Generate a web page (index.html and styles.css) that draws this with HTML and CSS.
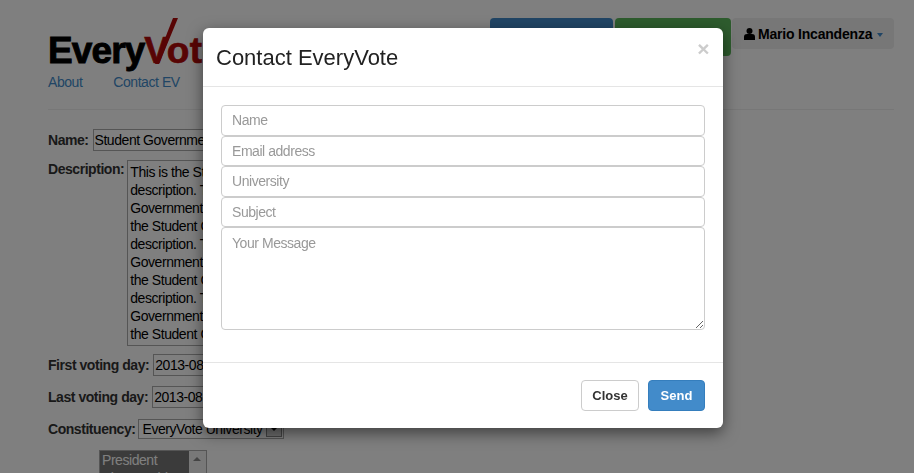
FILE: index.html
```html
<!DOCTYPE html>
<html lang="en">
<head>
  <meta charset="UTF-8" />
  <meta name="viewport" content="width=device-width, initial-scale=1.0" />
  <title>EveryVote</title>
  <link rel="stylesheet" href="styles.css">
</head>
<body>

  <div class="page">
    <header class="top">
      <div class="brand">
        <div class="logo">
          <span>Every</span><span class="logo-red">Vote</span>
          <svg class="logo-tick" width="30" height="46" viewBox="0 0 30 46"><polygon fill="#b00a0a" points="23,0 28,0 9,46 5,46"/></svg>
        </div>
        <nav class="links">
          <a href="#">About</a>
          <a href="#">Contact EV</a>
        </nav>
      </div>
      <div class="actions">
        <button class="btn-top blue" type="button"></button>
        <button class="btn-top green" type="button"></button>
        <button class="user" type="button">
          <svg class="user-icon" width="11" height="12" viewBox="0 0 11 12"><circle cx="5.500" cy="3" r="3" fill="#000"/><path d="M0 12V8.500C0 6.800 1.500 6 3 6h5c1.500 0 3 .8 3 2.500V12z" fill="#000"/></svg>
          Mario Incandenza
          <span class="caret"></span>
        </button>
      </div>
    </header>

    <form class="election">
      <div class="row">
        <label>Name:</label>
        <input class="field name" type="text" value="Student Government Election">
      </div>
      <div class="row row-top">
        <label>Description:</label>
        <textarea class="field desc" rows="10">This is the Student Government
description. This is the Student
Government description. This is
the Student Government
description. This is the Student
Government description. This is
the Student Government
description. This is the Student
Government description. This is
the Student Government</textarea>
      </div>
      <div class="row">
        <label>First voting day:</label>
        <input class="field day" type="text" value="2013-08-19">
      </div>
      <div class="row">
        <label>Last voting day:</label>
        <input class="field day" type="text" value="2013-08-23">
      </div>
      <div class="row">
        <label>Constituency:</label>
        <div class="field pick">EveryVote University<span class="pick-arrow"></span></div>
      </div>
      <div class="list">
        <div class="list-items">
          <div class="list-on">President</div>
          <div class="list-on">Vice President</div>
        </div>
        <div class="list-bar"><span></span></div>
      </div>
    </form>
  </div>

  <div class="backdrop"></div>

  <div class="modal">
    <div class="modal-header">
      <h4>Contact EveryVote</h4>
      <span class="close-x">&times;</span>
    </div>
    <div class="modal-body">
      <input class="control" type="text" placeholder="Name">
      <input class="control" type="text" placeholder="Email address">
      <input class="control" type="text" placeholder="University">
      <input class="control" type="text" placeholder="Subject">
      <textarea class="control message" placeholder="Your Message"></textarea>
    </div>
    <div class="modal-footer">
      <button class="btn" type="button">Close</button>
      <button class="btn btn-send" type="button">Send</button>
    </div>
  </div>

</body>
</html>
```

FILE: styles.css
```css
html, body {
  height: 100%;
  overflow: hidden;
}

body {
  margin: 0;
  font-family: 'Liberation Sans', Arial, sans-serif;
  font-size: 14px;
  letter-spacing: -0.45px;
  color: #333;
  background: #fff;
}

.page {
  padding: 18px 20px 0 48px;
}

.top {
  display: flex;
  justify-content: space-between;
  align-items: flex-start;
  height: 91px;
  border-bottom: 1px solid #eee;
}

.logo {
  position: relative;
  margin-top: 12px;
  font-size: 37px;
  line-height: 41px;
  height: 41px;
  font-weight: bold;
  letter-spacing: -0.9px;
  color: #000;
  -webkit-text-stroke: 0.9px #000;
  white-space: nowrap;
}

.logo-red {
  color: #b00a0a;
  letter-spacing: 0.4px;
  -webkit-text-stroke: 0.7px #b00a0a;
}

.logo-tick {
  position: absolute;
  left: 102px;
  top: -12px;
}

.links {
  display: flex;
  gap: 31px;
  margin-top: 1px;
}

.links a {
  color: #428bca;
  text-decoration: none;
  line-height: 20px;
}

.actions {
  display: flex;
  gap: 2px;
}

.btn-top {
  height: 38px;
  border: 0;
  border-radius: 4px;
}

.blue {
  width: 123px;
  background: #428bca;
}

.green {
  width: 116px;
  background: #5cb85c;
}

.user {
  display: flex;
  align-items: center;
  gap: 3px;
  width: 162px;
  height: 31px;
  margin-left: -1px;
  padding: 0 12px;
  border: 0;
  border-radius: 4px;
  background: #eee;
  color: #000;
  font: bold 14px 'Liberation Sans', Arial, sans-serif;
  letter-spacing: -0.2px;
  white-space: nowrap;
}

.user-icon {
  flex: none;
}

.caret {
  margin-left: 2px;
  margin-top: 2px;
  border-top: 4px solid #428bca;
  border-left: 3px solid transparent;
  border-right: 3px solid transparent;
}

.election {
  padding-top: 18px;
}

.row {
  display: flex;
  align-items: center;
  gap: 4px;
  height: 23px;
  margin-bottom: 9px;
}

.row-top {
  align-items: flex-start;
  gap: 3px;
  height: auto;
  margin-bottom: 7px;
}

.row label {
  font-weight: bold;
  color: #333;
  white-space: nowrap;
}

.row-top label {
  margin-top: 1px;
}

.field {
  box-sizing: border-box;
  padding: 1px;
  border: 1px solid #aaa;
  background: #fff;
  color: #000;
  font: 14px 'Liberation Sans', Arial, sans-serif;
  letter-spacing: -0.45px;
}

.name {
  width: 200px;
  height: 22px;
}

.desc {
  width: 220px;
  height: 186px;
  padding: 2px;
  line-height: 18px;
  overflow: hidden;
  resize: none;
  white-space: pre;
}

.day {
  width: 120px;
  height: 22px;
}

.pick {
  display: flex;
  justify-content: space-between;
  align-items: center;
  width: 146px;
  height: 20px;
  margin-left: -2px;
  padding-left: 4px;
  white-space: nowrap;
}

.pick-arrow {
  flex: none;
  width: 16px;
  height: 16px;
  background: #ddd;
  border: 1px solid #888;
  box-sizing: border-box;
  position: relative;
}

.pick-arrow::after {
  content: "";
  position: absolute;
  left: 3px;
  top: 5px;
  border-top: 4px solid #000;
  border-left: 4px solid transparent;
  border-right: 4px solid transparent;
}

.list {
  display: flex;
  width: 108px;
  height: 60px;
  margin: 10px 0 0 51px;
  border: 1px solid #aaa;
  box-sizing: border-box;
  color: #000;
}

.list-items {
  flex: 1;
  line-height: 18px;
  padding-left: 2px;
  background: #777;
}

.list-on {
  color: #fff;
}

.list-bar {
  width: 17px;
  background: #f0f0f0;
  position: relative;
}

.list-bar span {
  position: absolute;
  left: 4px;
  top: 6px;
  border-bottom: 4px solid #888;
  border-left: 4px solid transparent;
  border-right: 4px solid transparent;
}

.backdrop {
  position: fixed;
  inset: 0;
  background: rgba(0, 0, 0, 0.5);
}

.modal {
  position: absolute;
  left: 203px;
  top: 28px;
  width: 520px;
  height: 400px;
  box-sizing: border-box;
  background: #fff;
  border-radius: 6px;
  box-shadow: 0 5px 15px rgba(0, 0, 0, 0.5);
}

.modal-header {
  display: flex;
  justify-content: space-between;
  height: 59px;
  box-sizing: border-box;
  padding: 15px 13px;
  border-bottom: 1px solid #e5e5e5;
}

.modal-header h4 {
  margin: 0;
  font-size: 22px;
  font-weight: normal;
  line-height: 30px;
  letter-spacing: 0;
  color: #222;
}

.close-x {
  margin-top: -5px;
  margin-right: 1px;
  font-size: 21px;
  font-weight: bold;
  line-height: 21px;
  color: #ccc;
}

.modal-body {
  display: flex;
  flex-direction: column;
  height: 276px;
  box-sizing: border-box;
  padding: 18px 18px 0;
  border-bottom: 1px solid #e5e5e5;
}

.control {
  box-sizing: border-box;
  flex: none;
  width: 484px;
  height: 30.6px;
  padding: 6px 10px;
  border: 1px solid #ccc;
  border-radius: 4px;
  background: #fff;
  font: 14px 'Liberation Sans', Arial, sans-serif;
  letter-spacing: -0.45px;
  color: #555;
}

.control::placeholder {
  color: #999;
}

.message {
  height: 103px;
  padding-top: 7px;
  resize: vertical;
}

.modal-footer {
  display: flex;
  justify-content: flex-end;
  gap: 9px;
  padding: 17px 18px 0;
}

.btn {
  width: 58px;
  height: 31px;
  padding: 0;
  border: 1px solid #ccc;
  border-radius: 4px;
  background: #fff;
  color: #333;
  font: bold 13px 'Liberation Sans', Arial, sans-serif;
  letter-spacing: 0;
}

.btn-send {
  width: 57px;
  border-color: #357ebd;
  background: #428bca;
  color: #fff;
}
```
